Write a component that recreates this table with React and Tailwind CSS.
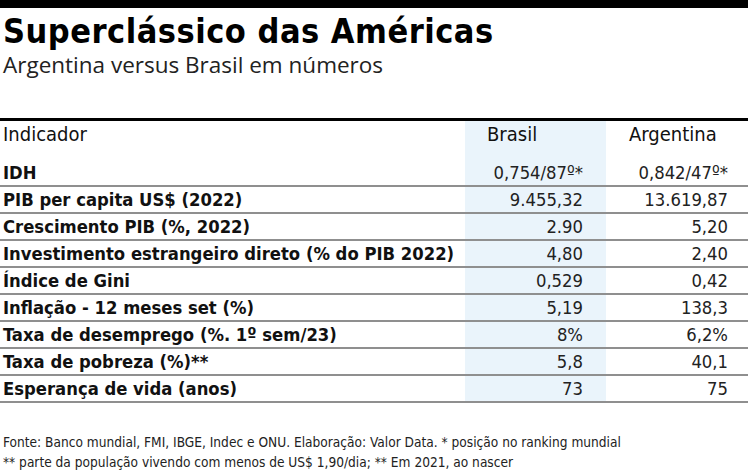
import React from "react";

const rows = [
  ["PIB per capita US$ (2022)", "9.455,32", "13.619,87"],
  ["Crescimento PIB (%, 2022)", "2.90", "5,20"],
  ["Investimento estrangeiro direto (% do PIB 2022)", "4,80", "2,40"],
  ["Índice de Gini", "0,529", "0,42"],
  ["Inflação - 12 meses set (%)", "5,19", "138,3"],
  ["Taxa de desemprego (%. 1º sem/23)", "8%", "6,2%"],
  ["Taxa de pobreza (%)**", "5,8", "40,1"],
  ["Esperança de vida (anos)", "73", "75"],
];

const cond = "font-['DejaVu_Sans_Condensed','Roboto_Condensed','Open_Sans',sans-serif] font-stretch-condensed";

const Row = ({ label, br, ar }) => (
  <div className="flex h-[27px] border-b-2 border-[#8f8f8f] items-center">
    <div className={`flex-1 pl-[3px] text-[18.3px] font-bold text-[#111] ${cond}`}>{label}</div>
    <div className={`w-[141px] h-full flex items-center justify-end pr-[23px] bg-[#eaf4fb] text-[18.3px] text-[#222] ${cond}`}>{br}</div>
    <div className={`w-[142px] flex justify-end pr-[20px] text-[18.3px] text-[#222] ${cond}`}>{ar}</div>
  </div>
);

export default function App() {
  return (
    <div className="w-[750px] h-[471px] bg-white overflow-hidden">
      <div className="w-[748px] h-[8px] bg-black" />
      <h1 className={`pl-[3px] mt-[3px] text-[34px] leading-[40px] tracking-[0.5px] font-bold text-black ${cond}`}>
        Superclássico das Américas
      </h1>
      <p className="pl-[3px] text-[22.5px] leading-[28px] text-[#222] font-['Open_Sans',sans-serif]">
        Argentina versus Brasil em números
      </p>
      <div className="w-[748px] mt-[39px]">
        <div className="h-[3px] bg-black" />
        <div className={`flex h-[39px] text-[20px] leading-[27px] text-[#111] ${cond}`}>
          <div className="flex-1 pl-[3px]">Indicador</div>
          <div className="w-[141px] pl-[22px] bg-[#eaf4fb]">Brasil</div>
          <div className="w-[142px] pl-[23px]">Argentina</div>
        </div>
        <Row label="IDH" br="0,754/87º*" ar="0,842/47º*" />
        {rows.map(([l, b, a]) => (
          <Row key={l} label={l} br={b} ar={a} />
        ))}
      </div>
      <div className={`mt-[29px] pl-[3px] text-[13.6px] leading-[20px] text-[#222] ${cond}`}>
        <p>Fonte: Banco mundial, FMI, IBGE, Indec e ONU. Elaboração: Valor Data. * posição no ranking mundial</p>
        <p>** parte da população vivendo com menos de US$ 1,90/dia; ** Em 2021, ao nascer</p>
      </div>
    </div>
  );
}
